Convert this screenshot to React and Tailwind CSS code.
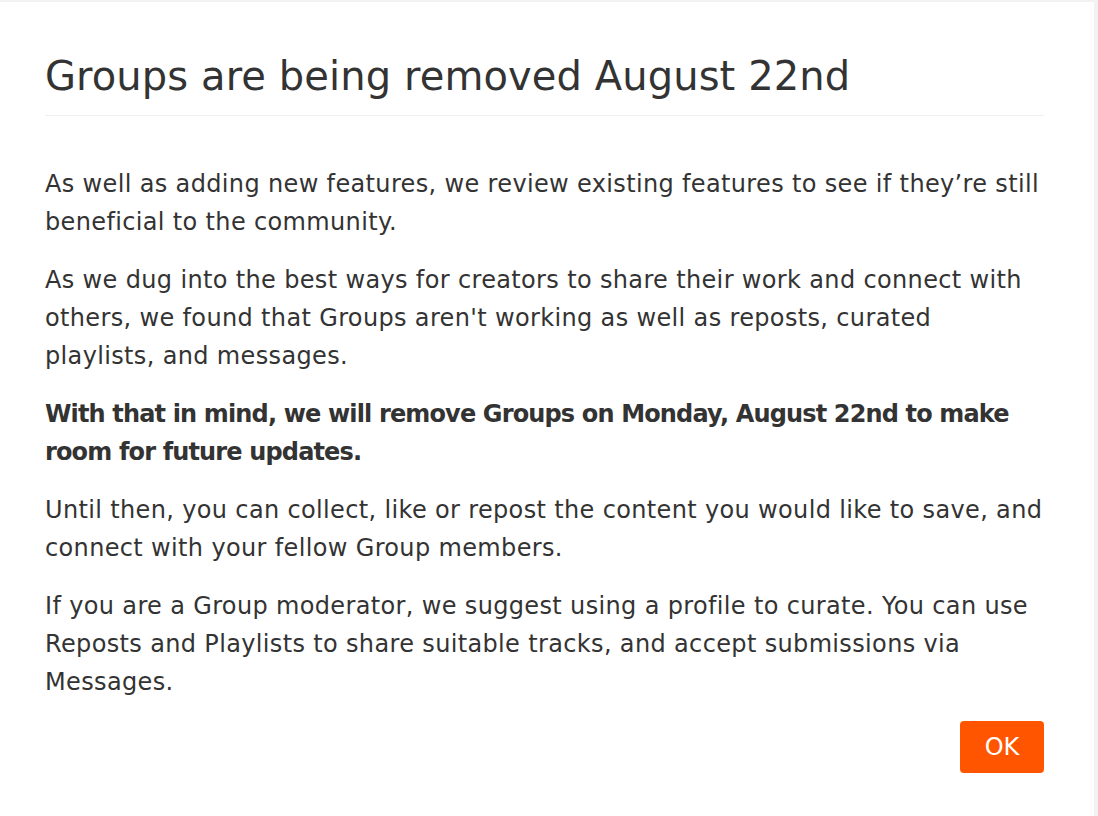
export default function App() {
  return (
    <div className="min-h-[816px] w-[1098px] bg-[#f2f2f2] pt-[2px] text-[#333]" style={{ fontFamily: '"DejaVu Sans", sans-serif' }}>
      <div className="w-[1094px] min-h-[814px] bg-white pl-[45px] pr-[50px] pt-[48px]">
        <h1 className="text-[40px] leading-[52px] tracking-[0.1px] text-[#333] pb-[13px] border-b border-[#f0f0f0]">Groups are being removed August 22nd</h1>
        <div className="pt-[49px] text-[24px] leading-[38px] tracking-[0.35px]">
          <p>As well as adding new features, we review existing features to see if they’re still<br />beneficial to the community.</p>
          <p className="mt-[20px]">As we dug into the best ways for creators to share their work and connect with<br />others, we found that Groups aren't working as well as reposts, curated<br />playlists, and messages.</p>
          <p className="mt-[20px] font-bold tracking-[-0.85px] whitespace-nowrap">With that in mind, we will remove Groups on Monday, August 22nd to make<br />room for future updates.</p>
          <p className="mt-[20px]">Until then, you can collect, like or repost the content you would like to save, and<br />connect with your fellow Group members.</p>
          <p className="mt-[20px]">If you are a Group moderator, we suggest using a profile to curate. You can use<br />Reposts and Playlists to share suitable tracks, and accept submissions via<br />Messages.</p>
        </div>
        <div className="flex justify-end mt-[20px]">
          <button className="w-[84px] h-[52px] rounded-[4px] bg-[#ff5500] text-white text-[24px]">OK</button>
        </div>
      </div>
    </div>
  );
}
